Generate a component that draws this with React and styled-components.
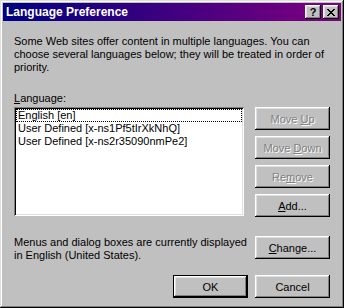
import React from "react";
import styled, { createGlobalStyle } from "styled-components";

const GlobalStyle = createGlobalStyle`
  html, body { margin: 0; padding: 0; background: #c0c0c0; }
  body { font-family: "Liberation Sans", Arial, sans-serif; font-size: 11px; color: #000; }
  * { box-sizing: border-box; }
`;

const Window = styled.div`
  width: 344px;
  height: 308px;
  padding: 3px;
  background: #c0c0c0;
  display: flex;
  flex-direction: column;
  box-shadow: inset -1px -1px #000, inset 1px 1px #dfdfdf, inset -2px -2px #808080, inset 2px 2px #fff;
`;

const TitleBar = styled.div`
  height: 18px;
  display: flex;
  align-items: center;
  padding: 0 2px 0 3px;
  background: linear-gradient(to right, #000080, #800080);
`;

const Title = styled.div`
  flex: 1;
  color: #fff;
  font-weight: bold;
  font-size: 12px;
  line-height: 18px;
  white-space: nowrap;
`;

const CaptionButtons = styled.div`
  display: flex;
  gap: 2px;
`;

const CaptionButton = styled.div`
  width: 16px;
  height: 14px;
  background: #c0c0c0;
  display: flex;
  align-items: center;
  justify-content: center;
  font-weight: bold;
  font-size: 11px;
  line-height: 14px;
  color: #000;
  box-shadow: inset -1px -1px #000, inset 1px 1px #fff, inset -2px -2px #808080, inset 2px 2px #dfdfdf;
`;

const Body = styled.div`
  flex: 1;
  display: flex;
  flex-direction: column;
  padding: 14px 11px 10px 11px;
`;

const Text = styled.p`
  margin: ${(p) => p.$mt || 0}px 0 0 0;
  line-height: 13px;
  white-space: nowrap;
`;

const Columns = styled.div`
  display: grid;
  grid-template-columns: 230px 75px;
  column-gap: 11px;
  margin-top: ${(p) => p.$mt || 0}px;
  align-items: start;
`;

const ListBox = styled.div`
  height: 109px;
  background: #fff;
  padding: 2px;
  box-shadow: inset 1px 1px #808080, inset -1px -1px #fff, inset 2px 2px #000, inset -2px -2px #dfdfdf;
`;

const ListItem = styled.div`
  height: 13px;
  line-height: 11px;
  padding-left: 1px;
  border: 1px ${(p) => (p.$focused ? "dotted #000" : "solid transparent")};
  white-space: nowrap;
`;

const ButtonColumn = styled.div`
  display: flex;
  flex-direction: column;
  gap: 6px;
`;

const Button = styled.button`
  width: 75px;
  height: 23px;
  padding: 0;
  border: none;
  background: #c0c0c0;
  font-family: "Liberation Sans", Arial, sans-serif;
  font-size: 11px;
  color: ${(p) => (p.disabled ? "#808080" : "#000")};
  text-shadow: ${(p) => (p.disabled ? "1px 1px 0 #fff" : "none")};
  box-shadow: ${(p) =>
    p.$default
      ? "inset 0 0 0 1px #000, inset -2px -2px #000, inset 2px 2px #fff, inset -3px -3px #808080, inset 3px 3px #dfdfdf"
      : "inset -1px -1px #000, inset 1px 1px #fff, inset -2px -2px #808080, inset 2px 2px #dfdfdf"};
  u { text-decoration: underline; text-underline-offset: 1px; }
`;

const FooterRow = styled.div`
  display: flex;
  justify-content: flex-end;
  gap: 7px;
  margin-top: 13px;
`;

const CloseGlyph = () => (
  <svg width="8" height="7" viewBox="0 0 8 7" shapeRendering="crispEdges">
    <path
      fill="#000"
      d="M0 0h2v1H0zM6 0h2v1H6zM1 1h2v1H1zM5 1h2v1H5zM2 2h4v1H2zM3 3h2v1H3zM2 4h4v1H2zM1 5h2v1H1zM5 5h2v1H5zM0 6h2v1H0zM6 6h2v1H6z"
    />
  </svg>
);

const languages = [
  "English [en]",
  "User Defined [x-ns1Pf5tIrXkNhQ]",
  "User Defined [x-ns2r35090nmPe2]",
];

export default function App() {
  return (
    <>
      <GlobalStyle />
      <Window>
        <TitleBar>
          <Title>Language Preference</Title>
          <CaptionButtons>
            <CaptionButton>?</CaptionButton>
            <CaptionButton>
              <CloseGlyph />
            </CaptionButton>
          </CaptionButtons>
        </TitleBar>
        <Body>
          <Text>
            Some Web sites offer content in multiple languages. You can
            <br />
            choose several languages below; they will be treated in order of
            <br />
            priority.
          </Text>
          <Text $mt={18}>
            <u>L</u>anguage:
          </Text>
          <Columns $mt={2}>
            <ListBox>
              {languages.map((l, i) => (
                <ListItem key={l} $focused={i === 0}>
                  {l}
                </ListItem>
              ))}
            </ListBox>
            <ButtonColumn>
              <Button disabled>
                Move <u>U</u>p
              </Button>
              <Button disabled>
                Move <u>D</u>own
              </Button>
              <Button disabled>
                Re<u>m</u>ove
              </Button>
              <Button>
                <u>A</u>dd...
              </Button>
            </ButtonColumn>
          </Columns>
          <Columns $mt={19}>
            <Text>
              Menus and dialog boxes are currently displayed
              <br />
              in English (United States).
            </Text>
            <Button>
              <u>C</u>hange...
            </Button>
          </Columns>
          <FooterRow>
            <Button $default>OK</Button>
            <Button>Cancel</Button>
          </FooterRow>
        </Body>
      </Window>
    </>
  );
}
